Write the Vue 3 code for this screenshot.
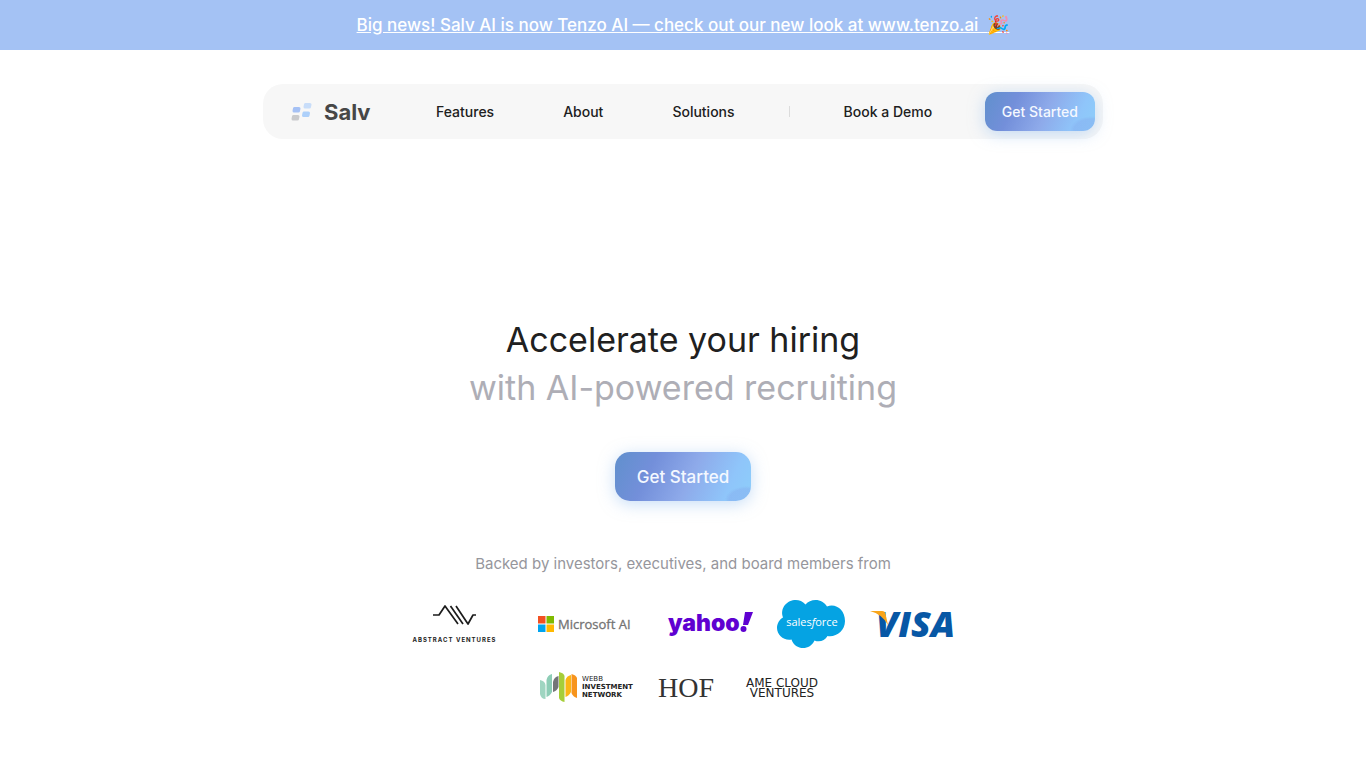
<script setup>
const links = ['Features', 'About', 'Solutions']
</script>

<template>
  <div class="page">
    <a class="banner" href="#news">Big news! Salv AI is now Tenzo AI — check out our new look at www.tenzo.ai&nbsp; <span class="party">🎉</span></a>

    <header class="nav">
      <a class="brand" href="#home">
        <svg class="mark" width="22" height="18" viewBox="0 0 22 18" aria-hidden="true">
          <g stroke-linejoin="round" stroke-width="3">
            <path d="M3.500 5.500H8L7.500 8H3Z" fill="#a5c1f5" stroke="#a5c1f5" />
            <path d="M14.500 1.500H19L18.500 4H14Z" fill="#c8ddf9" stroke="#c8ddf9" />
            <path d="M13 10H17.500L17 12.500H12.500Z" fill="#add0fa" stroke="#add0fa" />
            <path d="M2.500 13.500H7L6.500 16H2Z" fill="#c9cacd" stroke="#c9cacd" />
          </g>
        </svg>
        <span>Salv</span>
      </a>
      <nav class="links">
        <a v-for="item in links" :key="item" :href="'#' + item.toLowerCase()">{{ item }}</a>
      </nav>
      <span class="divider"></span>
      <a class="demo" href="#demo">Book a Demo</a>
      <button class="cta cta-small" type="button">Get Started</button>
    </header>

    <main class="hero">
      <h1>Accelerate your hiring<br /><span>with AI-powered recruiting</span></h1>
      <button class="cta cta-large" type="button">Get Started</button>
      <p class="backed">Backed by investors, executives, and board members from</p>

      <div class="logos">
        <svg width="85" height="48" viewBox="0 0 85 48" role="img" aria-label="Abstract Ventures">
          <g fill="none" stroke="#1c1c1c" stroke-width="1.700" stroke-linejoin="round">
            <path d="M21 15H27L33 6L46 24" />
            <path d="M38.500 6L51 24" />
            <path d="M44 6L56 24L61 15H64" />
          </g>
          <text x="42.500" y="42" text-anchor="middle" class="abstract">ABSTRACT VENTURES</text>
        </svg>

        <svg width="123" height="48" viewBox="0 0 123 48" role="img" aria-label="Microsoft AI">
          <path d="M17 16h7.500v7.500H17z" fill="#f25022" />
          <path d="M25.500 16H33v7.500h-7.500z" fill="#7fba00" />
          <path d="M17 24.500h7.500V32H17z" fill="#00a4ef" />
          <path d="M25.500 24.500H33V32h-7.500z" fill="#ffb900" />
          <text x="37" y="29" class="microsoft">Microsoft AI</text>
        </svg>

        <svg width="85" height="48" viewBox="0 0 85 48" role="img" aria-label="Yahoo">
          <text x="0" y="31" class="yahoo">yahoo</text>
          <path d="M77 12H85L80 25H75Z" fill="#5f01d1" />
          <circle cx="75.500" cy="29" r="3" fill="#5f01d1" />
        </svg>

        <svg width="69" height="48" viewBox="0 0 69 48" role="img" aria-label="Salesforce">
          <path d="M28.500 4.500C31 1.500 34.500 0 38.500 0C43.500 0 47.500 2.500 50 6.500C59 3 68 10 68 21C68 31 59 37.500 50.500 36C48 41 42 42.500 37.500 40.500C33 51 18 50.500 14.500 39.500C7 41 0 35 0 28C0 23.500 2.500 19.500 6 17.500C1 4 19-6 28.500 4.500Z" fill="#05a3e3" />
          <text x="35" y="26" text-anchor="middle" class="salesforce">sales<tspan font-style="italic">f</tspan>orce</text>
        </svg>

        <svg width="85" height="48" viewBox="0 0 85 48" role="img" aria-label="Visa">
          <text x="6" y="37" class="visa">VISA</text>
          <path d="M0 11H12Q15 11 15.500 14L18 25Q12 14 0 11Z" fill="#f9a51a" />
        </svg>
      </div>

      <div class="logos second">
        <svg width="94" height="32" viewBox="0 0 94 32" role="img" aria-label="Webb Investment Network">
          <path d="M0 9Q5 10 5.500 14V28Q1 28 0 23Z" fill="#9fd5c1" />
          <path d="M6.500 9Q7.500 4 12 3V21Q10 25 6.500 26Z" fill="#8dcdb6" />
          <path d="M13 11Q14 6 18.500 5V16Q17 20 13 21Z" fill="#747578" />
          <path d="M19 1Q24 2 24.500 5V31Q20 30 19 27Z" fill="#a6ce39" />
          <path d="M25.500 9Q26.500 5 31 4V21Q29 25 25.500 26Z" fill="#fbb615" />
          <path d="M31.500 3Q36 4 37 7V27Q33 26 31.500 22Z" fill="#f7941d" />
          <text x="42" y="10" class="webb thin">WEBB</text>
          <text x="42" y="18" class="webb">INVESTMENT</text>
          <text x="42" y="26" class="webb">NETWORK</text>
        </svg>
        <svg width="59" height="32" viewBox="0 0 59 32" role="img" aria-label="HOF">
          <text x="0" y="26" class="hof">HOF</text>
        </svg>
        <svg width="86" height="32" viewBox="0 0 86 32" role="img" aria-label="AME Cloud Ventures">
          <text x="41" y="16" text-anchor="middle" class="ame">AME CLOUD</text>
          <text x="41" y="26" text-anchor="middle" class="ame">VENTURES</text>
        </svg>
      </div>
    </main>
  </div>
</template>

<style>
body {
  margin: 0;
  background: #fff;
}
</style>

<style scoped>
.page {
  font-family: Inter, "Liberation Sans", sans-serif;
  color: #202020;
}
a {
  color: inherit;
  text-decoration: none;
}
.banner {
  display: block;
  padding: 14px 16px;
  background: #a4c2f4;
  color: #fff;
  font-size: 17px;
  line-height: 22px;
  font-weight: 500;
  text-align: center;
  text-decoration: underline;
}
.party {
  font-size: 18px;
  line-height: 20px;
}
.nav {
  display: flex;
  align-items: center;
  box-sizing: border-box;
  max-width: 840px;
  margin: 34px auto 0;
  padding: 8px 8px 8px 28px;
  border-radius: 20px;
  background: #f7f7f7;
  font-size: 14px;
  font-weight: 500;
  line-height: 20px;
}
.brand {
  display: flex;
  align-items: center;
  gap: 11px;
  width: 145px;
  color: #474747;
  font-size: 22px;
  font-weight: 700;
}
.links {
  display: flex;
  gap: 69px;
}
.divider {
  width: 1px;
  height: 11px;
  margin: 0 54px;
  background: #dcdcdc;
}
.cta {
  border: 0;
  color: #f4f8ff;
  font-family: inherit;
  font-weight: 500;
  background:
    radial-gradient(ellipse 22px 14px at 97% 98%, #86aeee80 0 80%, transparent 100%),
    linear-gradient(115deg, #6090cd 0%, #738fda 27%, #8eaaea 55%, #8fc5fa 82%, #8dcefa 100%);
  box-shadow: 0 3px 16px #8fbdf080;
}
.cta-small {
  height: 39px;
  margin-left: auto;
  padding: 0 17px;
  border-radius: 12px;
  font-size: 14px;
}
.cta-large {
  height: 49px;
  padding: 0 22px;
  border-radius: 15px;
  font-size: 17px;
}
.hero {
  display: flex;
  flex-direction: column;
  align-items: center;
  padding: 177px 16px 64px;
}
h1 {
  margin: 0 0 40px;
  font-size: 34px;
  line-height: 48px;
  font-weight: 400;
  text-align: center;
}
h1 span {
  color: #aeaeb6;
}
.backed {
  margin: 53px 0 26px;
  color: #96969c;
  font-size: 15px;
  line-height: 20px;
}
.logos {
  display: flex;
  flex-wrap: wrap;
  align-items: center;
  justify-content: center;
  gap: 24px;
}
.second {
  margin-top: 23px;
}
.logos svg {
  overflow: visible;
}
.abstract {
  font: 700 6px Inter, sans-serif;
  letter-spacing: 1px;
  fill: #1c1c1c;
}
.microsoft {
  font: 400 13px "Open Sans", sans-serif;
  fill: #737373;
  stroke: #737373;
  stroke-width: 0.3px;
}
.yahoo {
  font: 900 23px Inter, sans-serif;
  fill: #5f01d1;
}
.salesforce {
  font: 400 11px "Open Sans", sans-serif;
  fill: #fff;
}
.visa {
  font: italic 800 36px "Open Sans", sans-serif;
  fill: #0757a5;
}
.webb {
  font: 700 7px "DejaVu Sans", sans-serif;
  fill: #222;
}
.thin {
  font-weight: 400;
}
.hof {
  font: 400 28px "Liberation Serif", serif;
  fill: #333;
}
.ame {
  font: 400 12px "DejaVu Sans", sans-serif;
  fill: #222;
}
</style>
